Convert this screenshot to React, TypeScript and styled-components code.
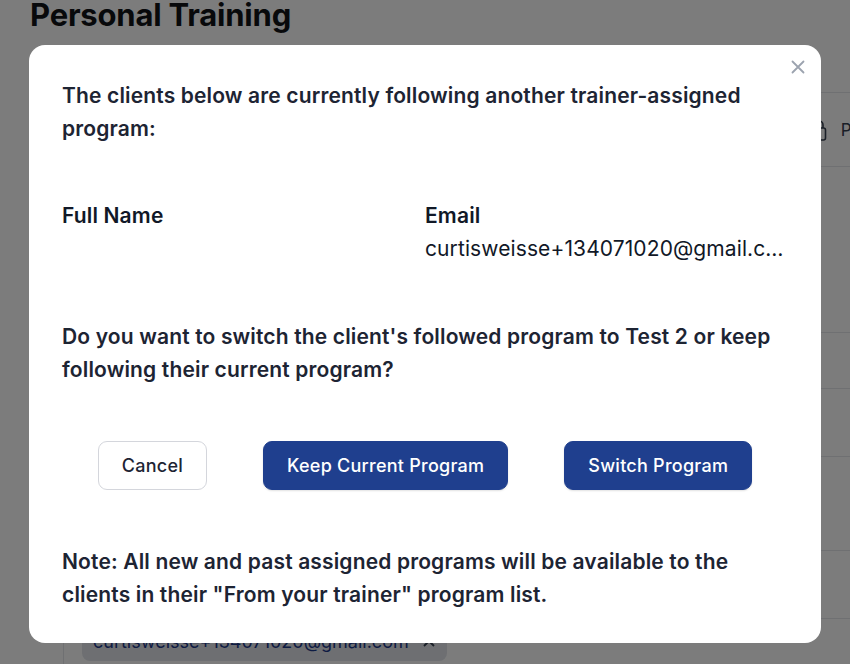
import React from "react";
import styled, { createGlobalStyle } from "styled-components";

const Global = createGlobalStyle`
  html, body { margin: 0; padding: 0; }
  body {
    width: 850px;
    height: 664px;
    overflow: hidden;
    background: #ffffff;
    font-family: "Inter", "Noto Sans", sans-serif;
    color: #1d2433;
  }
  * { box-sizing: border-box; }
`;

const Page = styled.div`
  position: relative;
  width: 850px;
  height: 664px;
  overflow: hidden;
  padding-left: 30px;
`;

const Title = styled.h1`
  margin: -5px 0 0 0;
  font-size: 31px;
  line-height: 40px;
  font-weight: 700;
  color: #111418;
  letter-spacing: -0.2px;
`;

const Table = styled.div`
  margin-top: 57px;
  display: flex;
  flex-direction: column;
  border-left: 1px solid #e5e7eb;
`;

const Row = styled.div<{ $h: number }>`
  height: ${(p) => p.$h}px;
  border-top: 1px solid #e5e7eb;
  display: flex;
  align-items: center;
  justify-content: flex-end;
`;

const RowAction = styled.div`
  display: flex;
  align-items: center;
  gap: 14px;
  font-size: 17px;
  color: #374151;
  margin-right: -28px;
`;

const ChipRow = styled.div`
  display: flex;
  padding: 2px 0 0 18px;
  margin-left: 33px;
  border-left: 1px solid #e5e7eb;
  height: 60px;
`;

const Chip = styled.div`
  display: flex;
  align-items: center;
  gap: 14px;
  height: 40px;
  padding: 0 12px 0 11px;
  background: #e2e5ea;
  border-radius: 8px;
  font-size: 18px;
  color: #1e3a8a;
`;

const Overlay = styled.div`
  position: fixed;
  inset: 0;
  background: rgba(0, 0, 0, 0.515);
  display: flex;
  justify-content: center;
  align-items: flex-start;
  padding-top: 45px;
`;

const Modal = styled.div`
  position: relative;
  width: 792px;
  height: 598px;
  background: #ffffff;
  border-radius: 16px;
  padding: 34px 33px 0 33px;
  display: flex;
  flex-direction: column;
`;

const Close = styled.button`
  position: absolute;
  top: 11px;
  right: 12px;
  width: 22px;
  height: 22px;
  border: 0;
  padding: 0;
  background: transparent;
  display: flex;
  align-items: center;
  justify-content: center;
  cursor: pointer;
`;

const Para = styled.p<{ $mt?: number }>`
  margin: ${(p) => p.$mt ?? 0}px 0 0 0;
  font-size: 21px;
  line-height: 33px;
  font-weight: 600;
  letter-spacing: 0.15px;
  color: #1d2433;
`;

const Columns = styled.div`
  margin-top: 54px;
  display: grid;
  grid-template-columns: 363px 363px;
`;

const Col = styled.div`
  display: flex;
  flex-direction: column;
  min-width: 0;
`;

const ColHead = styled.div`
  font-size: 21px;
  line-height: 33px;
  font-weight: 600;
  letter-spacing: 0.15px;
  color: #111827;
`;

const ColValue = styled.div`
  font-size: 21px;
  line-height: 33px;
  font-weight: 400;
  letter-spacing: 0.1px;
  color: #111827;
  white-space: nowrap;
  overflow: hidden;
  text-overflow: ellipsis;
`;

const Actions = styled.div`
  margin-top: 55px;
  display: flex;
  justify-content: center;
  gap: 56px;
`;

const Button = styled.button<{ $primary?: boolean }>`
  height: 49px;
  padding: 0 23px;
  border-radius: 9px;
  font-family: inherit;
  font-size: 18px;
  letter-spacing: 0.25px;
  font-weight: 500;
  cursor: pointer;
  border: 1px solid ${(p) => (p.$primary ? "#1f3f8e" : "#d4d6dc")};
  background: ${(p) => (p.$primary ? "#1f3f8e" : "#ffffff")};
  color: ${(p) => (p.$primary ? "#ffffff" : "#1d2433")};
  box-shadow: ${(p) => (p.$primary ? "0 1px 2px rgba(0,0,0,0.12)" : "none")};
`;

export default function App() {
  return (
    <>
      <Global />
      <Page>
        <Title>Personal Training</Title>
        <Table>
          <Row $h={74}>
            <RowAction>
              <svg width="16" height="22" viewBox="0 0 16 22" fill="none" stroke="#374151" strokeWidth="1.6">
                <path d="M4 9V6a4 4 0 0 1 8 0v3" />
                <rect x="1.5" y="9" width="13" height="12" rx="2" />
              </svg>
              <span>Print</span>
            </RowAction>
          </Row>
          <Row $h={166} />
          <Row $h={56} />
          <Row $h={68} />
          <Row $h={94} />
          <Row $h={68} />
          <Row $h={1} />
        </Table>
        <ChipRow>
          <Chip>
            curtisweisse+134071020@gmail.com
            <svg width="12" height="12" viewBox="0 0 12 12" stroke="#374151" strokeWidth="1.8">
              <path d="M1 1l10 10M11 1L1 11" />
            </svg>
          </Chip>
        </ChipRow>
      </Page>
      <Overlay>
        <Modal>
          <Close aria-label="Close">
            <svg width="14" height="14" viewBox="0 0 14 14" stroke="#9ca3af" strokeWidth="1.8" strokeLinecap="round">
              <path d="M1.5 1.5l11 11M12.5 1.5l-11 11" />
            </svg>
          </Close>
          <Para>
            The clients below are currently following another trainer-assigned program:
          </Para>
          <Columns>
            <Col>
              <ColHead>Full Name</ColHead>
            </Col>
            <Col>
              <ColHead>Email</ColHead>
              <ColValue>curtisweisse+134071020@gmail.com</ColValue>
            </Col>
          </Columns>
          <Para $mt={55}>
            Do you want to switch the client's followed program to Test 2 or keep following their current program?
          </Para>
          <Actions>
            <Button>Cancel</Button>
            <Button $primary>Keep Current Program</Button>
            <Button $primary>Switch Program</Button>
          </Actions>
          <Para $mt={55}>
            Note: All new and past assigned programs will be available to the clients in their "From your trainer" program list.
          </Para>
        </Modal>
      </Overlay>
    </>
  );
}
